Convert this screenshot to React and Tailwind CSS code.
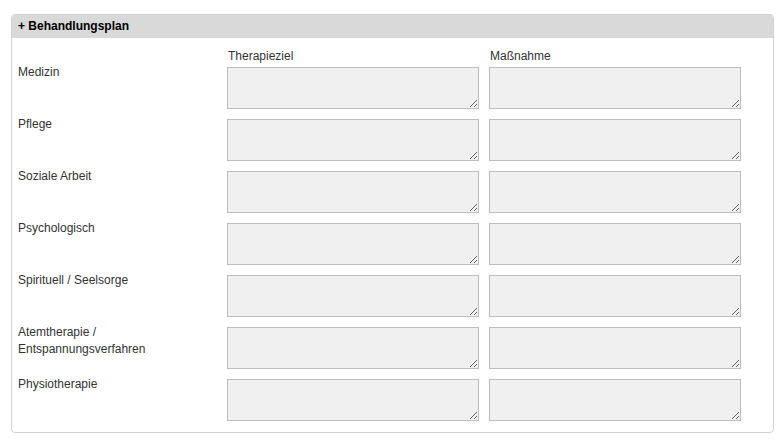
import React from "react";

// Zeilen des Behandlungsplans
const rows = [
  ["Medizin"],
  ["Pflege"],
  ["Soziale Arbeit"],
  ["Psychologisch"],
  ["Spirituell / Seelsorge"],
  ["Atemtherapie /", "Entspannungsverfahren"],
  ["Physiotherapie"],
];

function Field() {
  return (
    <textarea className="mt-[3px] block h-[42px] w-[252px] border border-[#bdbdbd] bg-[#f0f0f0] outline-none" />
  );
}

export default function App() {
  return (
    <div
      className="min-h-[444px] bg-white pl-[11px] pr-[9px] pt-[14px] text-[12px] leading-[17px] text-[#333]"
      style={{ fontFamily: '"Liberation Sans", Arial, sans-serif' }}
    >
      <div className="rounded-[4px] border border-[#d3d3d3] pb-[11px]">
        {/* Kopfzeile */}
        <div className="flex h-[23px] items-center rounded-t-[3px] bg-[#d9d9d9] px-[6px] font-bold text-black">
          + Behandlungsplan
        </div>

        {/* Spaltenköpfe */}
        <div className="mt-[10px] flex pl-[6px]">
          <div className="w-[209px]" />
          <div className="w-[252px] pl-[1px]">Therapieziel</div>
          <div className="ml-[10px] w-[252px] pl-[1px]">Maßnahme</div>
        </div>

        {/* Zeilen */}
        <div className="-mt-[1px] flex flex-col gap-[7px] pl-[6px]">
          {rows.map((label, i) => (
            <div key={i} className="flex items-start">
              <div className="w-[209px]">
                {label.map((l) => (
                  <div key={l}>{l}</div>
                ))}
              </div>
              <Field />
              <div className="ml-[10px]">
                <Field />
              </div>
            </div>
          ))}
        </div>
      </div>
    </div>
  );
}
